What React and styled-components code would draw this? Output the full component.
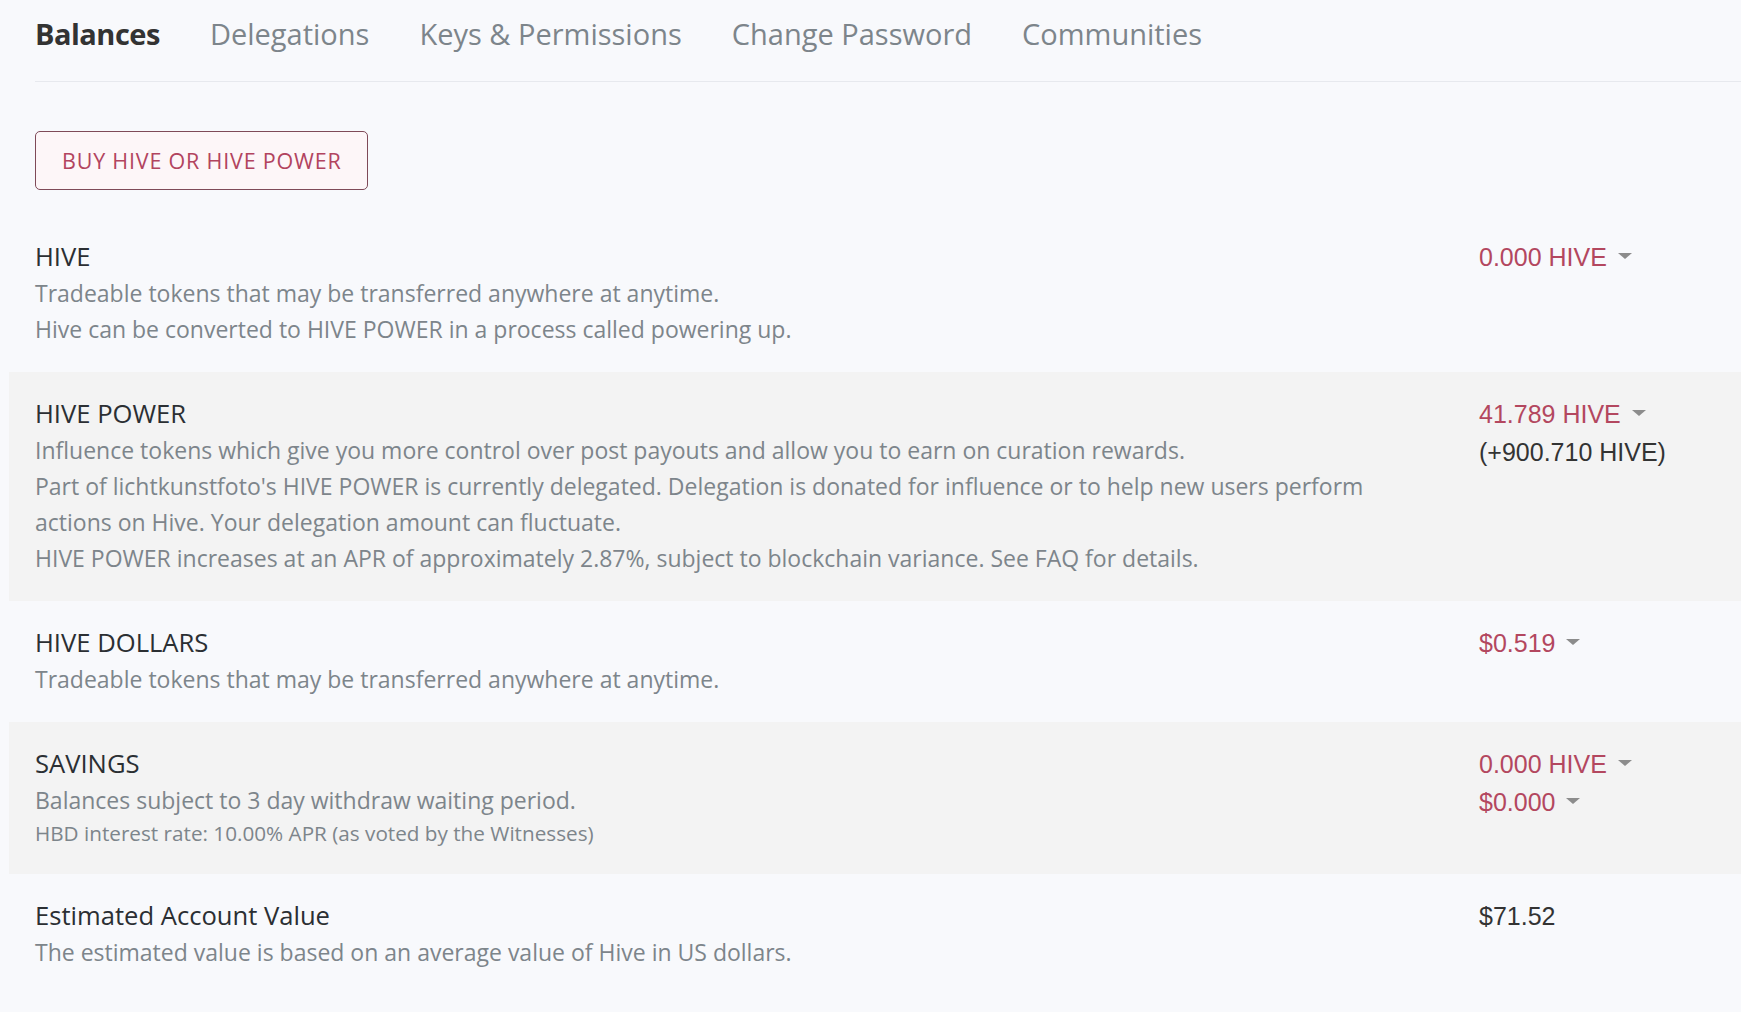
import React from "react";
import styled, { createGlobalStyle } from "styled-components";

const GlobalStyle = createGlobalStyle`
  html, body {
    margin: 0;
    padding: 0;
    background: #f8f9fc;
  }
  body {
    font-family: "Open Sans", "Noto Sans", sans-serif;
    color: #333;
    -webkit-font-smoothing: antialiased;
  }
  * { box-sizing: border-box; }
`;

const Page = styled.div`
  padding-left: 9px;
  width: 100%;
  min-height: 1012px;
  overflow: hidden;
`;

const TabBar = styled.nav`
  display: flex;
  gap: 50px;
  margin-left: 26px;
  padding: 14px 0 27px;
  border-bottom: 1px solid #e7e9ee;
`;

const Tab = styled.a`
  font-size: 29px;
  line-height: 40px;
  font-weight: ${(p) => (p.$active ? 700 : 400)};
  letter-spacing: ${(p) => (p.$active ? "-0.5px" : "0")};
  color: ${(p) => (p.$active ? "#333333" : "#7d858b")};
  text-decoration: none;
  cursor: pointer;
  white-space: nowrap;
`;

const ButtonRow = styled.div`
  padding: 49px 26px 25px;
  display: flex;
`;

const OutlineButton = styled.button`
  height: 59px;
  padding: 0 26px;
  background: #fdf6f8;
  border: 1.5px solid #7f4a58;
  border-radius: 5px;
  color: #b2445f;
  font-family: "Open Sans", "Noto Sans", sans-serif;
  font-size: 21.5px;
  letter-spacing: 0.8px;
  cursor: pointer;
`;

const Row = styled.section`
  display: grid;
  grid-template-columns: 1470px 1fr;
  align-items: start;
  padding: 24px 0 25px;
  background: ${(p) => (p.$striped ? "#f3f3f3" : "transparent")};
`;

const InfoCol = styled.div`
  padding: 0 90px 0 26px;
`;

const Title = styled.h3`
  margin: 0;
  font-size: 25.6px;
  font-weight: 400;
  line-height: 36px;
  color: #2b2f33;
`;

const Desc = styled.p`
  margin: 0;
  font-size: ${(p) => (p.$small ? "20.7px" : "23px")};
  line-height: ${(p) => (p.$small ? "31px" : "36px")};
  color: #7d858b;
`;

const ValueCol = styled.div`
  margin-top: -1px;
  display: flex;
  flex-direction: column;
  font-family: "Liberation Sans", Arial, sans-serif;
  font-size: 25px;
  line-height: 38px;
`;

const Value = styled.div`
  color: ${(p) => (p.$plain ? "#333333" : "#b3475f")};
  white-space: nowrap;
  cursor: ${(p) => (p.$plain ? "default" : "pointer")};
`;

const Caret = styled.span`
  display: inline-block;
  margin-left: 11px;
  vertical-align: 0.3em;
  border-top: 0.26em solid #8c8c8c;
  border-left: 0.29em solid transparent;
  border-right: 0.29em solid transparent;
`;

const Amount = ({ children }) => (
  <Value>
    {children}
    <Caret />
  </Value>
);

export default function App() {
  return (
    <>
      <GlobalStyle />
      <Page>
        <TabBar>
          <Tab $active>Balances</Tab>
          <Tab>Delegations</Tab>
          <Tab>Keys &amp; Permissions</Tab>
          <Tab>Change Password</Tab>
          <Tab>Communities</Tab>
        </TabBar>

        <ButtonRow>
          <OutlineButton>BUY HIVE OR HIVE POWER</OutlineButton>
        </ButtonRow>

        <Row>
          <InfoCol>
            <Title>HIVE</Title>
            <Desc>Tradeable tokens that may be transferred anywhere at anytime.</Desc>
            <Desc>Hive can be converted to HIVE POWER in a process called powering up.</Desc>
          </InfoCol>
          <ValueCol>
            <Amount>0.000 HIVE</Amount>
          </ValueCol>
        </Row>

        <Row $striped>
          <InfoCol>
            <Title>HIVE POWER</Title>
            <Desc>
              Influence tokens which give you more control over post payouts and allow you to earn on curation rewards.
            </Desc>
            <Desc>
              Part of lichtkunstfoto's HIVE POWER is currently delegated. Delegation is donated for influence or to help new users perform actions on Hive. Your delegation amount can fluctuate.
            </Desc>
            <Desc>
              HIVE POWER increases at an APR of approximately 2.87%, subject to blockchain variance. See FAQ for details.
            </Desc>
          </InfoCol>
          <ValueCol>
            <Amount>41.789 HIVE</Amount>
            <Value $plain>(+900.710 HIVE)</Value>
          </ValueCol>
        </Row>

        <Row>
          <InfoCol>
            <Title>HIVE DOLLARS</Title>
            <Desc>Tradeable tokens that may be transferred anywhere at anytime.</Desc>
          </InfoCol>
          <ValueCol>
            <Amount>$0.519</Amount>
          </ValueCol>
        </Row>

        <Row $striped>
          <InfoCol>
            <Title>SAVINGS</Title>
            <Desc>Balances subject to 3 day withdraw waiting period.</Desc>
            <Desc $small>HBD interest rate: 10.00% APR (as voted by the Witnesses)</Desc>
          </InfoCol>
          <ValueCol>
            <Amount>0.000 HIVE</Amount>
            <Amount>$0.000</Amount>
          </ValueCol>
        </Row>

        <Row>
          <InfoCol>
            <Title>Estimated Account Value</Title>
            <Desc>The estimated value is based on an average value of Hive in US dollars.</Desc>
          </InfoCol>
          <ValueCol>
            <Value $plain>$71.52</Value>
          </ValueCol>
        </Row>
      </Page>
    </>
  );
}
